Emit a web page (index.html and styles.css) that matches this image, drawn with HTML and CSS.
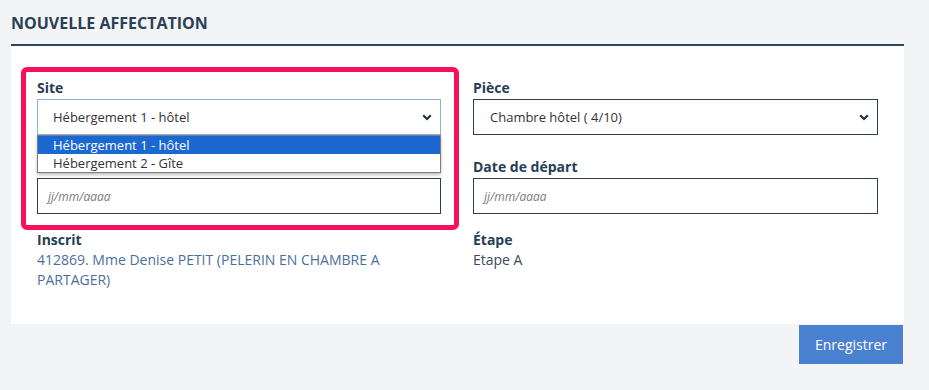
FILE: index.html
```html
<!DOCTYPE html>
<html lang="fr">
<head>
<meta charset="utf-8">
<title>Nouvelle affectation</title>
<link rel="stylesheet" href="styles.css">
</head>
<body>
<div class="page">
  <h1 class="title">NOUVELLE AFFECTATION</h1>
  <div class="panel">
    <div class="highlight"></div>
    <div class="grid">
      <div class="field">
        <label class="label">Site</label>
        <div class="select-wrap">
          <div class="select focused">
            <span>Hébergement 1 - hôtel</span>
            <svg class="chev" width="10" height="7" viewBox="0 0 10 7"><path d="M1.2 1.3 L5 5 L8.8 1.3" fill="none" stroke="#1f3346" stroke-width="2.2"/></svg>
          </div>
          <ul class="dropdown">
            <li class="opt active">Hébergement 1 - hôtel</li>
            <li class="opt">Hébergement 2 - Gîte</li>
          </ul>
        </div>
      </div>
      <div class="field">
        <label class="label">Pièce</label>
        <div class="select">
          <span class="pad-r">Chambre hôtel ( 4/10)</span>
          <svg class="chev" width="10" height="7" viewBox="0 0 10 7"><path d="M1.2 1.3 L5 5 L8.8 1.3" fill="none" stroke="#1f3346" stroke-width="2.2"/></svg>
        </div>
      </div>
      <div class="field">
        <label class="label">Date d'arrivée</label>
        <div class="input"><span class="ph">jj/mm/aaaa</span></div>
      </div>
      <div class="field">
        <label class="label">Date de départ</label>
        <div class="input"><span class="ph">jj/mm/aaaa</span></div>
      </div>
      <div class="field info">
        <div class="label">Inscrit</div>
        <div class="value link">412869. Mme Denise PETIT (PELERIN EN CHAMBRE A PARTAGER)</div>
      </div>
      <div class="field info">
        <div class="label">Étape</div>
        <div class="value">Etape A</div>
      </div>
    </div>
  </div>
  <div class="actions">
    <button class="btn">Enregistrer</button>
  </div>
</div>
</body>
</html>
```
FILE: styles.css
```css
* { box-sizing: border-box; }
html, body { margin: 0; padding: 0; }
body {
  background: #f3f4f6;
  font-family: "Open Sans", "Liberation Sans", sans-serif;
  color: #333;
}
.page {
  padding: 0 25px 0 11px;
}
.title {
  margin: 0;
  padding-top: 12px;
  height: 46px;
  font-size: 16px;
  line-height: 22px;
  font-weight: 700;
  color: #2b3f55;
  border-bottom: 2px solid #2c4660;
}
.panel {
  position: relative;
  background: #fff;
  padding: 32px 26px 34px 26px;
}
.highlight {
  position: absolute;
  left: 10px;
  top: 21px;
  width: 438px;
  height: 163px;
  border: 5px solid #f7105a;
  border-radius: 6px;
  pointer-events: none;
  z-index: 5;
}
.grid {
  display: grid;
  grid-template-columns: 404px 405px;
  column-gap: 32px;
  row-gap: 22px;
}
.field { display: flex; flex-direction: column; }
.label {
  font-size: 14px;
  line-height: 20px;
  font-weight: 700;
  color: #253e56;
  margin-bottom: 1px;
}
.select-wrap { position: relative; }
.select {
  height: 36px;
  border: 1px solid #2c3e50;
  display: flex;
  align-items: center;
  justify-content: space-between;
  padding: 0 8px 0 15px;
  font-size: 13px;
  color: #333;
}
.select.focused { border-color: #84b4e4; }
.pad-r { padding-left: 1px; }
.chev { display: block; margin-top: 1px; }
.dropdown {
  position: absolute;
  left: 0;
  top: 36px;
  width: 100%;
  margin: 0;
  padding: 0;
  list-style: none;
  background: #fff;
  border: 1px solid #7d7d7d;
  box-shadow: 0 2px 3px rgba(0,0,0,0.25);
  z-index: 3;
}
.opt {
  height: 18px;
  line-height: 18px;
  font-size: 13px;
  padding-left: 15px;
  color: #333;
}
.opt.active { background: #1c68d1; color: #fff; }
.input {
  height: 36px;
  border: 1px solid #2c3e50;
  display: flex;
  align-items: center;
  padding: 0 10px;
}
.ph {
  font-size: 12px;
  font-style: italic;
  color: #7c7c7c;
}
.info { margin-top: -6px; }
.info .label { margin-bottom: 0; }
.value {
  font-size: 14px;
  line-height: 20px;
  color: #3b4a5a;
}
.value.link { color: #4a6f9c; }
.actions {
  display: flex;
  justify-content: flex-end;
  padding-top: 1px;
  padding-right: 1px;
}
.btn {
  height: 39px;
  width: 104px;
  border: 0;
  background: #4a80d0;
  color: #fff;
  font-family: "Open Sans", "Liberation Sans", sans-serif;
  font-size: 14px;
}
```
